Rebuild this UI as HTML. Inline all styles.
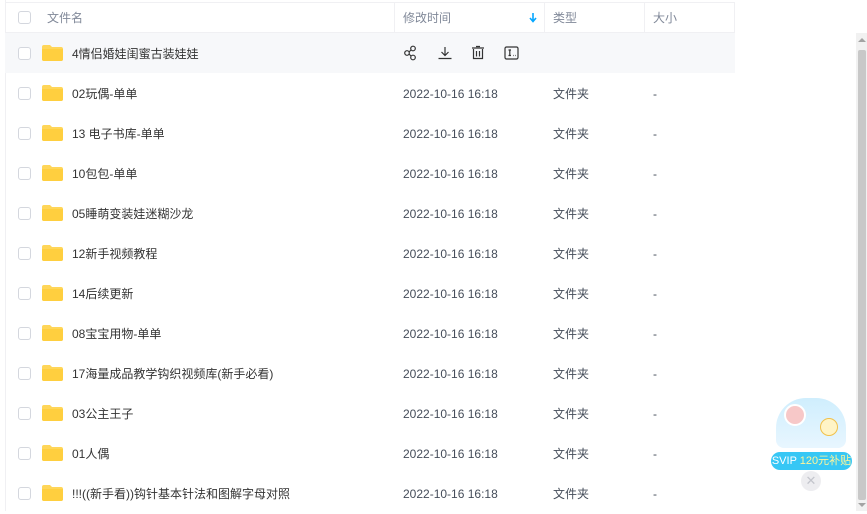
<!DOCTYPE html>
<html><head><meta charset="utf-8"><style>
*{margin:0;padding:0;box-sizing:border-box}
body{width:867px;height:511px;overflow:hidden;background:#fff;font-family:"Liberation Sans","Noto Sans CJK SC",sans-serif;font-size:12px;color:#454d5a;position:relative}
.hdr{position:absolute;left:5px;top:2px;width:730px;height:31px;border-top:1px solid #f0f0f3;border-bottom:1px solid #f0f0f3;color:#818999}
.hdr div{position:absolute;top:0;height:30px;line-height:30px}
.cb{position:absolute;width:13px;height:13px;border:1px solid #d4d7de;border-radius:3px;background:#fff}
.row{position:absolute;left:5px;width:730px;height:40px}
.row .cb{left:13px;top:14px}
.fold{position:absolute;left:37px;top:12px;width:21px;height:16px}
.nm{position:absolute;left:67px;top:1px;line-height:40px;color:#333}
.t{position:absolute;left:398px;top:1px;line-height:40px;color:#454d5a}
.ty{position:absolute;left:548px;top:1px;line-height:40px}
.sz{position:absolute;left:648px;top:1px;line-height:40px}
.vl{position:absolute;top:0;width:1px;height:30px;background:#f0f0f3}
</style></head><body>
<div style="position:absolute;left:5px;top:0;width:1px;height:511px;background:#f0f0f3"></div>
<div class="hdr">
<span class="cb" style="left:13px;top:8px"></span>
<div style="left:42px">文件名</div>
<div class="vl" style="left:389px"></div>
<div style="left:398px">修改时间</div>
<svg style="position:absolute;left:524px;top:10px" width="8" height="10" viewBox="0 0 8 10"><path d="M4 0V8M1 5L4 8.5L7 5" stroke="#06a7ff" stroke-width="1.6" fill="none"/></svg>
<div class="vl" style="left:539px"></div>
<div style="left:548px">类型</div>
<div class="vl" style="left:639px"></div>
<div style="left:648px">大小</div>
<div class="vl" style="left:729px"></div>
</div>
<div id="rows"></div>
<div style="position:absolute;left:856px;top:33px;width:11px;height:478px;background:#f1f1f1"></div>
<div style="position:absolute;left:858px;top:50px;width:8px;height:450px;background:#c8c8c8;border-radius:2px"></div>
<div style="position:absolute;left:858px;top:38px;width:0;height:0;border-left:4px solid transparent;border-right:4px solid transparent;border-bottom:4px solid #a3a3a3"></div>
<div style="position:absolute;left:858px;top:503px;width:0;height:0;border-left:4px solid transparent;border-right:4px solid transparent;border-top:4px solid #a3a3a3"></div>
<div style="position:absolute;left:776px;top:398px;width:70px;height:50px;border-radius:30px 30px 8px 8px;background:linear-gradient(#cfeefd,#e8f6ff)"></div>
<div style="position:absolute;left:784px;top:404px;width:22px;height:22px;border-radius:50%;background:#f7c8c8;border:2px solid #fff"></div>
<div style="position:absolute;left:820px;top:418px;width:18px;height:18px;border-radius:50%;background:#fff4c6;border:1px solid #f1c14b"></div>
<div style="position:absolute;left:771px;top:452px;width:81px;height:18px;border-radius:9px;background:#37c7f5;color:#fff;font-size:11px;line-height:18px;text-align:center">SVIP <span style="color:#fff59a">120元补贴</span></div>
<div style="position:absolute;left:801px;top:471px;width:20px;height:20px;border-radius:50%;background:#ededf0;color:#c3c5cc;text-align:center;line-height:20px;font-size:13px">✕</div>
<script>
const names=["4情侣婚娃闺蜜古装娃娃","02玩偶-单单","13 电子书库-单单","10包包-单单","05睡萌变装娃迷糊沙龙","12新手视频教程","14后续更新","08宝宝用物-单单","17海量成品教学钩织视频库(新手必看)","03公主王子","01人偶","!!!((新手看))钩针基本针法和图解字母对照"];
let h="";
names.forEach((n,i)=>{
const y=33+i*40;
const hov=i==0;
h+=`<div class="row" style="top:${y}px;${hov?'background:#f7f8fa':''}"><span class="cb"></span>
<svg class="fold" viewBox="0 0 21 16"><path d="M0 2Q0 0 2 0H8L10 2H19Q21 2 21 4V14Q21 16 19 16H2Q0 16 0 14Z" fill="#ffd659"/><path d="M0 4H21V14Q21 16 19 16H2Q0 16 0 14Z" fill="#ffcf3f"/></svg>
<div class="nm">${n}</div>`;
if(hov){h+=`<svg style="position:absolute;left:398px;top:12px" width="130" height="16" viewBox="0 0 130 16" fill="none" stroke="#333" stroke-width="1.2">
<circle cx="4" cy="8" r="2.3"/><circle cx="10" cy="3.5" r="2.3"/><circle cx="10" cy="12.5" r="2.3"/><path d="M6 7L8 5M6 9L8 11"/>
<path d="M42 2V10M38.5 7L42 10.5L45.5 7M35.5 13.5H48.5"/>
<path d="M69 3H81M73 1.5H77M70.5 4V13.5H79.5V4M73.5 6V11.5M76.5 6V11.5"/>
<rect x="102" y="2" width="13" height="12" rx="1.5"/><path d="M105.5 5H108M106.8 5V10.5M105.5 10.5H108"/><path d="M110 10.5H110.6M112 10.5H112.6"/></svg>`}
else{h+=`<div class="t">2022-10-16 16:18</div><div class="ty">文件夹</div><div class="sz">-</div>`}
h+=`</div>`;});
document.getElementById('rows').innerHTML=h;
</script>
</body></html>
